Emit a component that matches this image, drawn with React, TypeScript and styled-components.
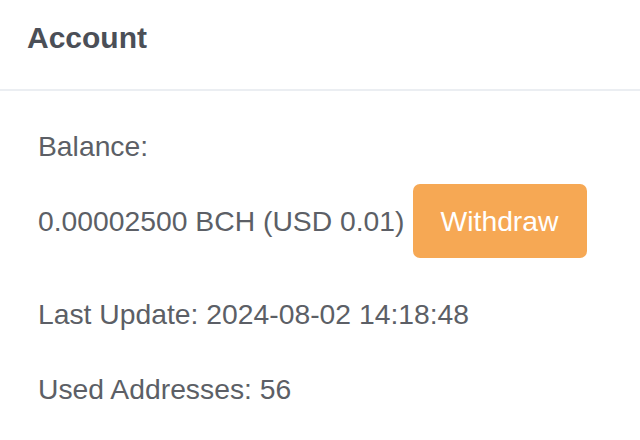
import React from "react";
import styled, { createGlobalStyle } from "styled-components";

const Global = createGlobalStyle`
  html, body { margin: 0; padding: 0; background: #ffffff; }
  body { font-family: "Liberation Sans", Arial, sans-serif; }
`;

const Card = styled.div`
  width: 640px;
  height: 440px;
  background: #ffffff;
  display: flex;
  flex-direction: column;
`;

const Header = styled.div`
  height: 91px;
  box-sizing: border-box;
  padding: 16px 27px 0;
  border-bottom: 2px solid #ebeef2;
  display: flex;
  align-items: flex-start;
`;

const Title = styled.h2`
  margin: 0;
  font-size: 30px;
  line-height: 44px;
  font-weight: 700;
  color: #4b4f57;
`;

const Body = styled.div`
  padding: 35px 38px 0;
  display: flex;
  flex-direction: column;
`;

const Line = styled.div<{ $gap?: number }>`
  font-size: 28.3px;
  line-height: 40px;
  color: #5c5f66;
  margin-top: ${(p) => p.$gap ?? 0}px;
  display: flex;
  align-items: center;
`;

const WithdrawButton = styled.button`
  margin-left: 8px;
  height: 74px;
  width: 174px;
  padding: 0;
  border: none;
  border-radius: 7px;
  background: #f6a854;
  color: #ffffff;
  font-family: "Liberation Sans", Arial, sans-serif;
  font-size: 28.3px;
  cursor: pointer;
`;

export default function App() {
  return (
    <>
      <Global />
      <Card>
        <Header>
          <Title>Account</Title>
        </Header>
        <Body>
          <Line>Balance:</Line>
          <Line $gap={18}>
            0.00002500 BCH (USD 0.01)
            <WithdrawButton>Withdraw</WithdrawButton>
          </Line>
          <Line $gap={36}>Last Update: 2024-08-02 14:18:48</Line>
          <Line $gap={35}>Used Addresses: 56</Line>
        </Body>
      </Card>
    </>
  );
}
